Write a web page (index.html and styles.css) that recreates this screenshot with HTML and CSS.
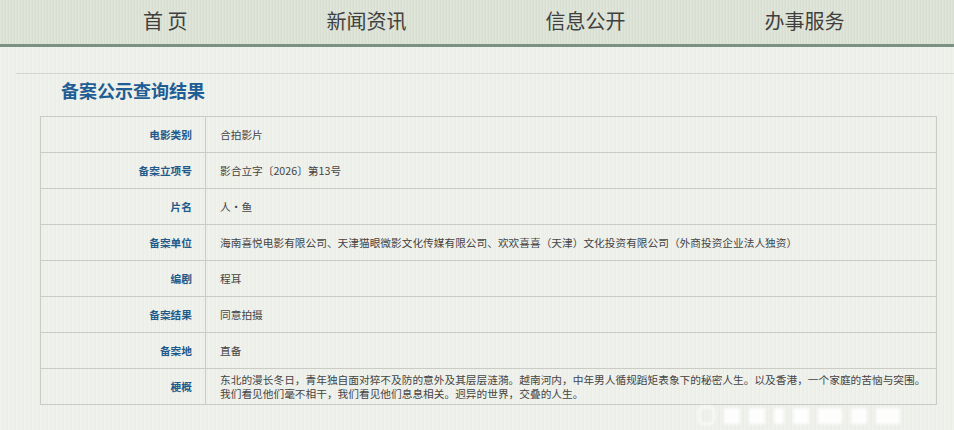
FILE: index.html
```html
<!DOCTYPE html>
<html lang="zh-CN">
<head>
    <meta charset="UTF-8">
    <meta name="viewport" content="width=device-width, initial-scale=1.0">
    <title>备案公示查询结果</title>
    <link rel="stylesheet" href="styles.css">
</head>
<body>
    <div class="nav">
        <ul class="nav-list">
            <li>首&nbsp;页</li>
            <li>新闻资讯</li>
            <li>信息公开</li>
            <li>办事服务</li>
        </ul>
    </div>

    <div class="content">
        <h2 class="title">备案公示查询结果</h2>
        <table class="result">
            <tr>
                <th>电影类别</th>
                <td>合拍影片</td>
            </tr>
            <tr>
                <th>备案立项号</th>
                <td>影合立字〔2026〕第13号</td>
            </tr>
            <tr>
                <th>片名</th>
                <td>人·鱼</td>
            </tr>
            <tr>
                <th>备案单位</th>
                <td>海南喜悦电影有限公司、天津猫眼微影文化传媒有限公司、欢欢喜喜（天津）文化投资有限公司（外商投资企业法人独资）</td>
            </tr>
            <tr>
                <th>编剧</th>
                <td>程耳</td>
            </tr>
            <tr>
                <th>备案结果</th>
                <td>同意拍摄</td>
            </tr>
            <tr>
                <th>备案地</th>
                <td>直备</td>
            </tr>
            <tr>
                <th>梗概</th>
                <td class="summary">东北的漫长冬日，青年独自面对猝不及防的意外及其层层涟漪。越南河内，中年男人循规蹈矩表象下的秘密人生。以及香港，一个家庭的苦恼与突围。<br>我们看见他们毫不相干，我们看见他们息息相关。迥异的世界，交叠的人生。</td>
            </tr>
        </table>
    </div>

    <!-- blurred watermark in the corner -->
    <div class="watermark">
        <span class="wm-logo"></span>
        <span class="wm-bar"></span>
        <span class="wm-bar"></span>
        <span class="wm-bar short"></span>
        <span class="wm-bar"></span>
        <span class="wm-bar wide"></span>
        <span class="wm-bar"></span>
        <span class="wm-bar wide"></span>
    </div>
</body>
</html>
```

FILE: styles.css
```css
body {
    margin: 0;
    font-family: "Microsoft YaHei", "Noto Sans CJK SC", "Liberation Sans", sans-serif;
    background-color: #eef0ea;
    background-image: repeating-linear-gradient(90deg, rgba(255,255,255,0.18) 0 1px, rgba(0,0,0,0) 1px 3px, rgba(0,0,0,0.015) 3px 4px);
    height: 430px;
    overflow: hidden;
    position: relative;
}
.nav {
    height: 44px;
    background-color: #dce2d5;
    background-image: repeating-linear-gradient(90deg, rgba(255,255,255,0.12) 0 1px, rgba(0,0,0,0) 1px 2px, rgba(0,0,0,0.02) 2px 3px);
    border-bottom: 3px solid #7b9283;
}
.nav-list {
    list-style: none;
    margin: 0;
    padding: 0 0 0 143px;
    display: flex;
    gap: 139px;
}
.nav-list li {
    font-size: 20px;
    line-height: 42px;
    color: #404040;
}
.content {
    margin: 26px 0 0 16px;
    border-top: 1px solid #d3d6cf;
}
.title {
    margin: 0;
    padding: 4px 0 0 45px;
    height: 38px;
    font-size: 18px;
    line-height: 24px;
    color: #1f5e94;
    font-weight: bold;
}
.result {
    margin-left: 24px;
    width: 897px;
    border-collapse: collapse;
    font-size: 10.7px;
}
.result th,
.result td {
    border: 1px solid #c9cbc4;
    height: 35px;
    padding: 0;
    vertical-align: middle;
}
.result th {
    width: 151px;
    padding-right: 13px;
    text-align: right;
    color: #1f5a8a;
    font-weight: bold;
}
.result td {
    padding-left: 14px;
    color: #444;
}
.result .summary {
    line-height: 14px;
}
.watermark {
    position: absolute;
    left: 698px;
    top: 406px;
    display: flex;
    align-items: center;
    gap: 9px;
    filter: blur(1.5px);
}
.wm-logo {
    width: 13px;
    height: 15px;
    border-radius: 6px;
    border: 2px solid #fff;
}
.wm-bar {
    width: 16px;
    height: 16px;
    background: #fff;
    opacity: 0.9;
}
.wm-bar.short {
    width: 10px;
}
.wm-bar.wide {
    width: 24px;
}
```
